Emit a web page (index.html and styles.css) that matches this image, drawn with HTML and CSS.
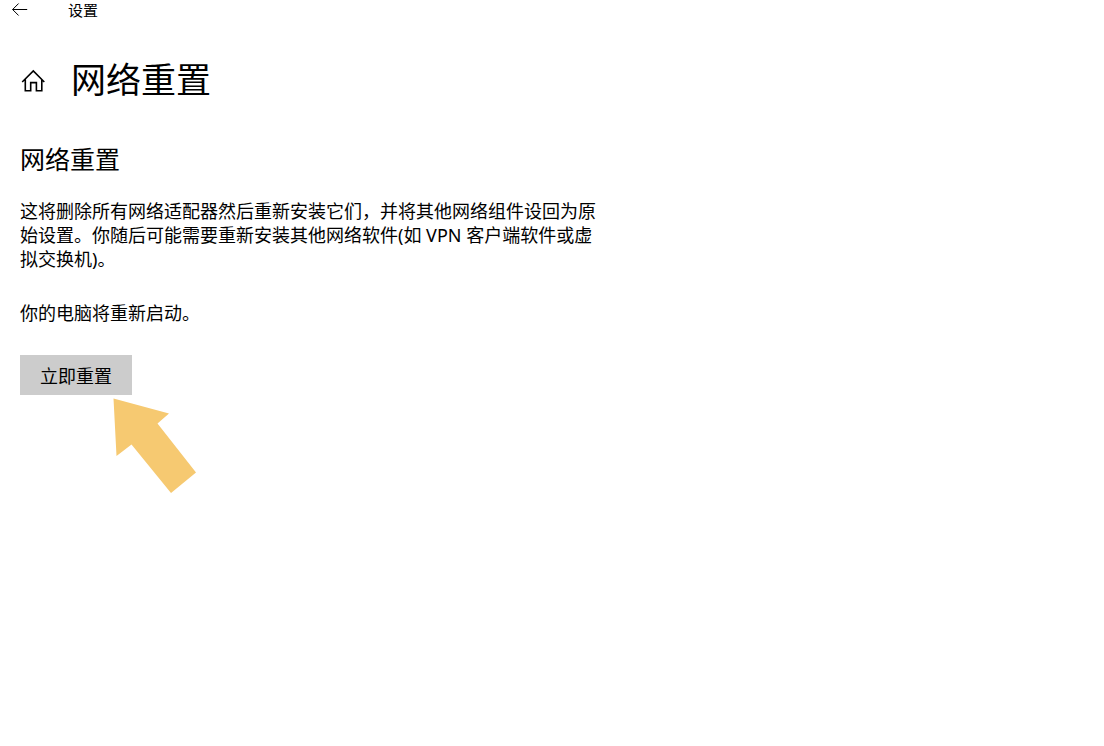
FILE: index.html
```
<!DOCTYPE html>
<html lang="zh-CN">
<head>
    <meta charset="UTF-8">
    <meta name="viewport" content="width=device-width, initial-scale=1.0">
    <title>设置</title>
    <link rel="stylesheet" href="styles.css">
</head>
<body>
    <header class="title-bar">
        <button type="button" class="back-button" aria-label="返回">
            <svg width="16" height="14" viewBox="0 0 16 14" fill="none" stroke="currentColor">
                <path d="M15.2 6.5H0.6M6.6 0.5L0.6 6.5L6.6 12.5"/>
            </svg>
        </button>
        <span class="app-name">设置</span>
    </header>

    <div class="page-header">
        <a href="#" class="home-link" aria-label="主页">
            <svg width="24" height="24" viewBox="0 0 24 24" fill="none" stroke="currentColor" stroke-width="1.6">
                <path d="M1.2 14L12.3 3L23.3 14M4.3 11.5V22.8H9.7V14.6H15.4V22.8H20.8V11.5"/>
            </svg>
        </a>
        <h1>网络重置</h1>
    </div>

    <main class="content">
        <h2>网络重置</h2>
        <p>这将删除所有网络适配器然后重新安装它们，并将其他网络组件设回为原始设置。你随后可能需要重新安装其他网络软件(如 VPN 客户端软件或虚拟交换机)。</p>
        <p>你的电脑将重新启动。</p>
        <button type="button" class="reset-button">立即重置</button>
        <svg class="pointer" width="84" height="96" viewBox="0 0 84 96" aria-hidden="true">
            <path d="M0.5 0.5L56 15.5L44.5 25.5L83 74.5L58 95L18.5 46.5L3.5 58Z"/>
        </svg>
    </main>
</body>
</html>
```
FILE: styles.css
```
body {
    margin: 0;
    background: white;
    color: black;
    font-family: "Noto Sans", "Noto Sans CJK SC", sans-serif;
    font-size: 18px;
    line-height: 24px;
}

.title-bar {
    display: flex;
    align-items: center;
    gap: 40px;
    height: 20px;
    padding-left: 12px;
}

.back-button {
    display: flex;
    padding: 0;
    border: 0;
    background: none;
    color: inherit;
}

.app-name {
    font-size: 15px;
    line-height: 20px;
}

.page-header {
    display: flex;
    align-items: center;
    gap: 26px;
    padding: 36px 21px 0;
}

.home-link {
    display: flex;
    color: inherit;
}

h1 {
    margin: 0;
    font-size: 35px;
    line-height: 48px;
    font-weight: normal;
}

.content {
    max-width: 580px;
    padding: 39px 20px;
}

h2 {
    margin: 0 0 24px;
    font-size: 25px;
    line-height: 32px;
    font-weight: normal;
}

p {
    margin: 0 0 30px;
}

.reset-button {
    display: block;
    height: 40px;
    padding: 2px 20px 0;
    border: 0;
    background: #ccc;
    color: inherit;
    font: inherit;
}

.pointer {
    display: block;
    margin: 3px 0 0 93px;
    fill: #f6c971;
}
```
